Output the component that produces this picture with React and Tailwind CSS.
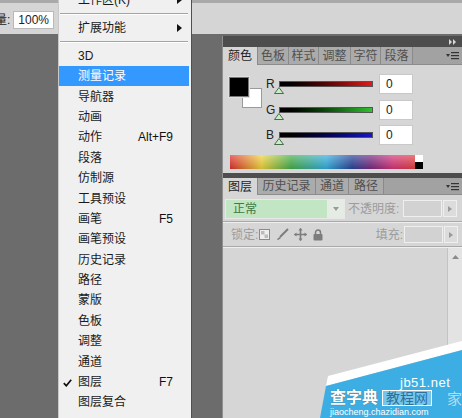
import React from "react";

const menuItems = [
  { label: "工作区(K)", sub: true },
  { sep: true },
  { label: "扩展功能", sub: true },
  { sep: true },
  { label: "3D" },
  { label: "测量记录", active: true },
  { label: "导航器" },
  { label: "动画" },
  { label: "动作", shortcut: "Alt+F9" },
  { label: "段落" },
  { label: "仿制源" },
  { label: "工具预设" },
  { label: "画笔", shortcut: "F5" },
  { label: "画笔预设" },
  { label: "历史记录" },
  { label: "路径" },
  { label: "蒙版" },
  { label: "色板" },
  { label: "调整" },
  { label: "通道" },
  { label: "图层", shortcut: "F7", checked: true },
  { label: "图层复合" },
];

const colorTabs = [
  { label: "颜色", w: "w-[35px]", active: true },
  { label: "色板", w: "w-[31px]" },
  { label: "样式", w: "w-[30px]" },
  { label: "调整", w: "w-[32px]" },
  { label: "字符", w: "w-[30px]" },
  { label: "段落", w: "w-[32px]" },
];

const layerTabs = [
  { label: "图层", w: "w-[35px]", active: true },
  { label: "历史记录", w: "w-[58px]" },
  { label: "通道", w: "w-[33px]" },
  { label: "路径", w: "w-[35px]" },
];

const PanelMenuIcon = () => (
  <svg width="13" height="9" viewBox="0 0 13 9" className="mr-[3px]">
    <polygon points="0,3 4,3 2,6" fill="#333" />
    <rect x="5" y="1" width="8" height="1.2" fill="#333" />
    <rect x="5" y="4" width="8" height="1.2" fill="#333" />
    <rect x="5" y="7" width="8" height="1.2" fill="#333" />
  </svg>
);

const Tabs = ({ tabs, h }) => (
  <div className={`flex ${h} bg-[#a2a2a2] border-b border-[#8c8c8c]`}>
    {tabs.map((t) => (
      <div
        key={t.label}
        className={`${t.w} flex items-center justify-center text-[12px] border-r border-[#8a8a8a] ${
          t.active ? "bg-[#d6d6d6] text-[#1e1e1e] -mb-px" : "bg-[#ababab] text-[#505050]"
        }`}
      >
        {t.label}
      </div>
    ))}
    <div className="flex-1 flex items-center justify-end">
      <PanelMenuIcon />
    </div>
  </div>
);

const Slider = ({ label, to }) => (
  <div className="flex items-center h-[20px]">
    <span className="w-[13px] text-[12px] text-[#222] leading-none">{label}</span>
    <div className="relative w-[94px] h-[6px]">
      <div className={`w-full h-full border border-[#555] bg-linear-to-r from-black ${to}`} />
      <svg width="10" height="7" viewBox="0 0 10 7" className="absolute left-[-5px] top-[6px]">
        <polygon points="5,0.5 9.5,6.5 0.5,6.5" fill="#c9ecc9" stroke="#4a6a4a" strokeWidth="1" />
      </svg>
    </div>
    <div className="ml-[6px] w-[34px] h-[20px] bg-white border border-[#c9c9c9] text-[12px] pl-[6px] flex items-center text-[#222]">
      0
    </div>
  </div>
);

const SmallInput = () => (
  <div className="flex items-center">
    <div className="w-[39px] h-[17px] bg-[#d2d2d2] border border-[#efefef]" />
    <div className="ml-px w-[14px] h-[17px] bg-[#dcdcdc] border border-[#efefef] flex items-center justify-center">
      <svg width="4" height="6" viewBox="0 0 4 6">
        <polygon points="0,0 4,3 0,6" fill="#999" />
      </svg>
    </div>
  </div>
);

const MenuItem = ({ item }) => {
  if (item.sep) {
    return (
      <div className="h-[7.6px] pt-[2.6px] pl-px pr-[3px]">
        <div className="h-px bg-[#a4a4a4]" />
        <div className="h-px bg-white" />
      </div>
    );
  }
  return (
    <div
      className={`relative h-[20.4px] mr-[2px] flex items-center pl-[19px] pr-[16px] text-[12px] ${
        item.active ? "bg-[#3399ff] text-white" : "text-[#1a1a1a]"
      }`}
    >
      {item.checked && (
        <svg width="9" height="8" viewBox="0 0 9 8" className="absolute left-[4px] top-[7px]">
          <path d="M0.8 4.2 L3.3 6.8 L8.2 0.8" stroke="#111" strokeWidth="1.7" fill="none" />
        </svg>
      )}
      <span className="flex-1">{item.label}</span>
      {item.shortcut && <span className="text-[12px] text-[#111]">{item.shortcut}</span>}
      {item.sub && (
        <svg width="5" height="8" viewBox="0 0 5 8" className="mr-[-9px]">
          <polygon points="0,0 5,4 0,8" fill="#111" />
        </svg>
      )}
    </div>
  );
};

export default function App() {
  return (
    <div className="relative w-[462px] h-[418px] overflow-hidden bg-[#6c6c6c] flex flex-col font-['Liberation_Sans','Noto_Sans_CJK_SC',sans-serif]">
      {/* options bar */}
      <div className="h-[34px] shrink-0 bg-[#d5d5d5] border-t-[3px] border-[#a9a9a9] flex items-center">
        <span className="ml-[-5px] mt-[2px] text-[12px] text-[#222]">量:</span>
        <div className="ml-[3px] mt-[2px] w-[41px] h-[18px] bg-white border border-[#b9b9b9] text-[12px] text-[#222] pl-[4px] flex items-center">
          100%
        </div>
      </div>

      <div className="flex flex-1">
        <div className="w-[222px]" />

        {/* right panels */}
        <div className="w-[240px] mt-[2px] flex flex-col bg-[#d6d6d6] border-l border-[#8f8f8f]">
          <div className="h-[11px] bg-[#4d4d4d] flex items-center justify-end pr-[5px]">
            <svg width="8" height="6" viewBox="0 0 8 6">
              <polygon points="0,0 3,3 0,6" fill="#d8d8d8" />
              <polygon points="4,0 7,3 4,6" fill="#d8d8d8" />
            </svg>
          </div>
          <Tabs tabs={colorTabs} h="h-[18px]" />

          {/* color panel */}
          <div className="h-[108px] flex flex-col pt-[9px]">
            <div className="flex">
              <div className="relative ml-[6px] mt-[3px] w-[33px] h-[31px]">
                <div className="absolute left-[13px] top-[11px] w-[20px] h-[20px] bg-white border border-[#9a9a9a]" />
                <div className="absolute left-0 top-0 w-[20px] h-[20px] bg-black border border-[#777] outline outline-[#e0e0e0]" />
              </div>
              <div className="ml-[4px] flex flex-col gap-[5.5px]">
                <Slider label="R" to="to-[#e21b1b]" />
                <Slider label="G" to="to-[#2fc22f]" />
                <Slider label="B" to="to-[#1717c8]" />
              </div>
            </div>
            <div className="mt-[10px] ml-[7px] flex w-[193px] h-[14px]">
              <div className="flex-1 bg-[linear-gradient(to_bottom,rgba(255,255,255,0.3),rgba(0,0,0,0.12)),linear-gradient(to_right,#e0302e_0%,#f0d43c_17%,#46b04c_33%,#33aee0_52%,#2a449a_66%,#782c82_76%,#d8347a_88%,#e44040_100%)]" />
              <div className="w-[8px] flex flex-col">
                <div className="flex-1 bg-white" />
                <div className="flex-1 bg-black" />
              </div>
            </div>
          </div>

          <div className="h-[5px] bg-[#4d4d4d]" />
          <Tabs tabs={layerTabs} h="h-[17px]" />

          {/* layers panel */}
          <div className="flex-1 flex flex-col">
            <div className="h-[27px] pt-[4px] pl-[2px] pr-[4px] flex items-start border-b border-[#a9a9a9]">
              <div className="flex w-[120px] h-[20px] border border-[#e8e8e8]">
                <div className="flex-1 bg-[#c2e5c4] text-[12px] text-[#3f7a43] pl-[7px] flex items-center">正常</div>
                <div className="w-[17px] bg-[#e4ece4] flex items-center justify-center">
                  <svg width="6" height="4" viewBox="0 0 6 4">
                    <polygon points="0,0 6,0 3,4" fill="#999" />
                  </svg>
                </div>
              </div>
              <span className="ml-[3px] mt-[1px] text-[12px] text-[#9c9c9c] w-[55px]">不透明度:</span>
              <div className="mt-[1px]">
                <SmallInput />
              </div>
            </div>
            <div className="h-[25px] border-t border-[#efefef] border-b border-b-[#a9a9a9] pl-[8px] pr-[4px] flex items-center">
              <span className="text-[12px] text-[#9c9c9c]">锁定:</span>
              <svg width="11" height="11" viewBox="0 0 11 11" className="ml-[1px]">
                <rect x="0.5" y="0.5" width="10" height="10" fill="#eee" stroke="#8a8a8a" />
                <rect x="2" y="2" width="3.5" height="3.5" fill="#bbb" />
                <rect x="5.5" y="5.5" width="3.5" height="3.5" fill="#bbb" />
              </svg>
              <svg width="13" height="13" viewBox="0 0 13 13" className="ml-[6px]">
                <path d="M12 1 L4 9" stroke="#7c7c7c" strokeWidth="2" />
                <path d="M4 9 Q1 10 1 12 Q3 12 5 10 Z" fill="#7c7c7c" />
              </svg>
              <svg width="13" height="13" viewBox="0 0 13 13" className="ml-[5px]">
                <path d="M6.5 0.5 V12.5 M0.5 6.5 H12.5" stroke="#7c7c7c" strokeWidth="1.6" />
                <polygon points="6.5,0 4.5,2.5 8.5,2.5" fill="#7c7c7c" />
                <polygon points="6.5,13 4.5,10.5 8.5,10.5" fill="#7c7c7c" />
                <polygon points="0,6.5 2.5,4.5 2.5,8.5" fill="#7c7c7c" />
                <polygon points="13,6.5 10.5,4.5 10.5,8.5" fill="#7c7c7c" />
              </svg>
              <svg width="10" height="12" viewBox="0 0 10 12" className="ml-[6px]">
                <path d="M2.5 5 V3.5 A2.5 2.5 0 0 1 7.5 3.5 V5" stroke="#7c7c7c" strokeWidth="1.5" fill="none" />
                <rect x="0.5" y="5" width="9" height="6.5" rx="1" fill="#7c7c7c" />
              </svg>
              <span className="ml-auto mr-[1px] text-[12px] text-[#9c9c9c]">填充:</span>
              <SmallInput />
            </div>
            <div className="flex-1 flex border-t border-[#efefef]">
              <div className="flex-1" />
              <div className="w-[15px] bg-[#e3e3e3] border-l border-[#c4c4c4] flex justify-center pt-[7px]">
                <svg width="7" height="4" viewBox="0 0 7 4">
                  <polygon points="3.5,0 7,4 0,4" fill="#8a8a8a" />
                </svg>
              </div>
            </div>
          </div>
        </div>
      </div>

      {/* window menu */}
      <div className="absolute left-[58px] top-0 w-[134px] h-[418px] bg-[#f0f0f0] border-l border-[#c9c9c9] border-r border-r-[#505050] overflow-hidden">
        <div className="mt-[-10.4px]">
          {menuItems.map((item, i) => (
            <MenuItem key={i} item={item} />
          ))}
        </div>
      </div>

      {/* watermark */}
      <div className="absolute left-[300px] top-[336px] w-[162px] h-[82px] pointer-events-none">
        <svg width="162" height="82" viewBox="0 0 162 82" className="absolute left-0 top-0">
          <polygon points="28,40 162,5 162,14 26,50" fill="#ffffff" />
          <polygon points="26,50 162,14 162,82 20,82" fill="#3caee4" />
        </svg>
        <span className="absolute left-[100px] top-[40px] text-[13px] leading-none text-white tracking-[0.5px]">jb51.net</span>
        <div className="absolute left-[82px] top-[54px] px-[3px] h-[16px] bg-[#8fd0ef]/70 border border-white flex items-center text-[14px] text-[#2f6f9a] leading-none">
          教程网
        </div>
        <span className="absolute left-[147px] top-[55px] text-[15px] leading-none text-white/60">家</span>
        <span className="absolute left-[30px] top-[54px] text-[16px] leading-none text-white font-bold [text-shadow:0_0_1px_#555]">查字典</span>
        <span className="absolute left-[30px] top-[72px] text-[9px] leading-none text-white">jiaocheng.chazidian.com</span>
      </div>
    </div>
  );
}
